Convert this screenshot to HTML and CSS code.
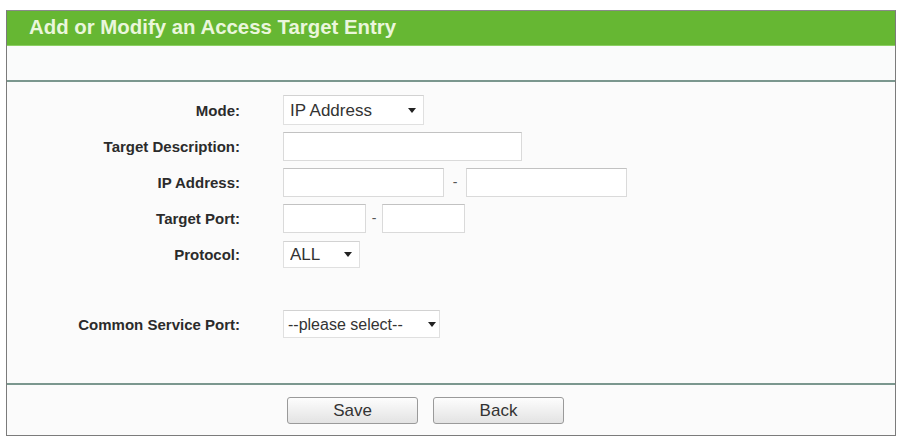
FILE: index.html
```html
<!DOCTYPE html>
<html>
<head>
<meta charset="utf-8">
<link rel="stylesheet" href="styles.css">
</head>
<body>
<div class="panel">
  <div class="head">Add or Modify an Access Target Entry</div>
  <div class="blank"></div>
  <div class="form">
    <div class="row">
      <label class="lbl">Mode:</label>
      <div class="ctl">
        <div class="sel sel-mode"><select><option>IP Address</option></select><span class="arrow"></span></div>
      </div>
    </div>
    <div class="row">
      <label class="lbl">Target Description:</label>
      <div class="ctl"><input class="inp inp-desc" type="text"></div>
    </div>
    <div class="row">
      <label class="lbl">IP Address:</label>
      <div class="ctl">
        <input class="inp inp-ip" type="text"><span class="dash">-</span><input class="inp inp-ip" type="text">
      </div>
    </div>
    <div class="row">
      <label class="lbl">Target Port:</label>
      <div class="ctl">
        <input class="inp inp-port" type="text"><span class="dash dash-port">-</span><input class="inp inp-port" type="text">
      </div>
    </div>
    <div class="row">
      <label class="lbl">Protocol:</label>
      <div class="ctl">
        <div class="sel sel-proto"><select><option>ALL</option></select><span class="arrow"></span></div>
      </div>
    </div>
    <div class="row row-common">
      <label class="lbl">Common Service Port:</label>
      <div class="ctl">
        <div class="sel sel-common"><select><option>--please select--</option></select><span class="arrow"></span></div>
      </div>
    </div>
  </div>
  <div class="buttons">
    <button class="btn">Save</button>
    <button class="btn">Back</button>
  </div>
</div>
</body>
</html>
```
FILE: styles.css
```css
html, body {
  margin: 0;
  padding: 0;
  background: #ffffff;
}
body {
  font-family: "Liberation Sans", Arial, sans-serif;
  color: #333;
  padding: 10px 0 0 6px;
}
.panel {
  width: 888px;
  border: 1px solid #7b7b7b;
  border-top-color: #8a8a8a;
  background: #fbfbfb;
}
.head {
  height: 34px;
  background: #66b733;
  color: #eaf6dc;
  font-weight: bold;
  font-size: 20.4px;
  line-height: 33px;
  padding-left: 22px;
  border-bottom: 1px solid #8ccf63;
}
.blank {
  height: 34px;
  background: #fafbfb;
  border-bottom: 2px solid #7b978e;
}
.form {
  padding: 10px 0 41px 0;
  border-bottom: 2px solid #7b978e;
}
.row {
  display: flex;
  align-items: center;
  height: 36px;
}
.row-common {
  margin-top: 34px;
}
.lbl {
  width: 233px;
  text-align: right;
  font-weight: bold;
  font-size: 15px;
  color: #2b2b2b;
  margin-right: 43px;
}
.ctl {
  display: flex;
  align-items: center;
}
.inp {
  box-sizing: border-box;
  height: 29px;
  border: 1px solid #dadada;
  border-top-color: #c2c2c2;
  background: #fff;
  margin: 0;
  padding: 0 4px;
}
.inp-desc { width: 239px; }
.inp-ip { width: 161px; }
.inp-port { width: 83px; }
.dash {
  width: 22px;
  text-align: center;
  font-size: 14px;
  color: #555;
}
.dash-port { width: 16px; }
.sel {
  position: relative;
  display: inline-block;
}
.sel select {
  -webkit-appearance: none;
  appearance: none;
  box-sizing: border-box;
  height: 30px;
  border: 1px solid #e0e0e0;
  border-top-color: #d2d2d2;
  background: #fff;
  font-family: "Liberation Sans", Arial, sans-serif;
  font-size: 17px;
  color: #333;
  padding: 0 0 0 6px;
  margin: 0;
  border-radius: 0;
}
.sel-mode select { width: 141px; }
.sel-proto select { width: 77px; height: 27px; }
.sel-common select { width: 157px; height: 28px; font-size: 16px; padding-left: 4px; }
.arrow {
  position: absolute;
  top: 50%;
  right: 8px;
  margin-top: -2px;
  width: 0;
  height: 0;
  border-left: 4px solid transparent;
  border-right: 4px solid transparent;
  border-top: 5px solid #222;
}
.sel-common .arrow { right: 4px; }
.buttons {
  display: flex;
  gap: 15px;
  padding: 12px 0 11px 280px;
}
.btn {
  box-sizing: border-box;
  width: 131px;
  height: 27px;
  border: 1px solid #9a9a9a;
  border-radius: 3px;
  background: linear-gradient(#fdfdfd, #e3e3e3);
  font-family: "Liberation Sans", Arial, sans-serif;
  font-size: 17px;
  color: #333;
  padding: 0;
  margin: 0;
}
```
